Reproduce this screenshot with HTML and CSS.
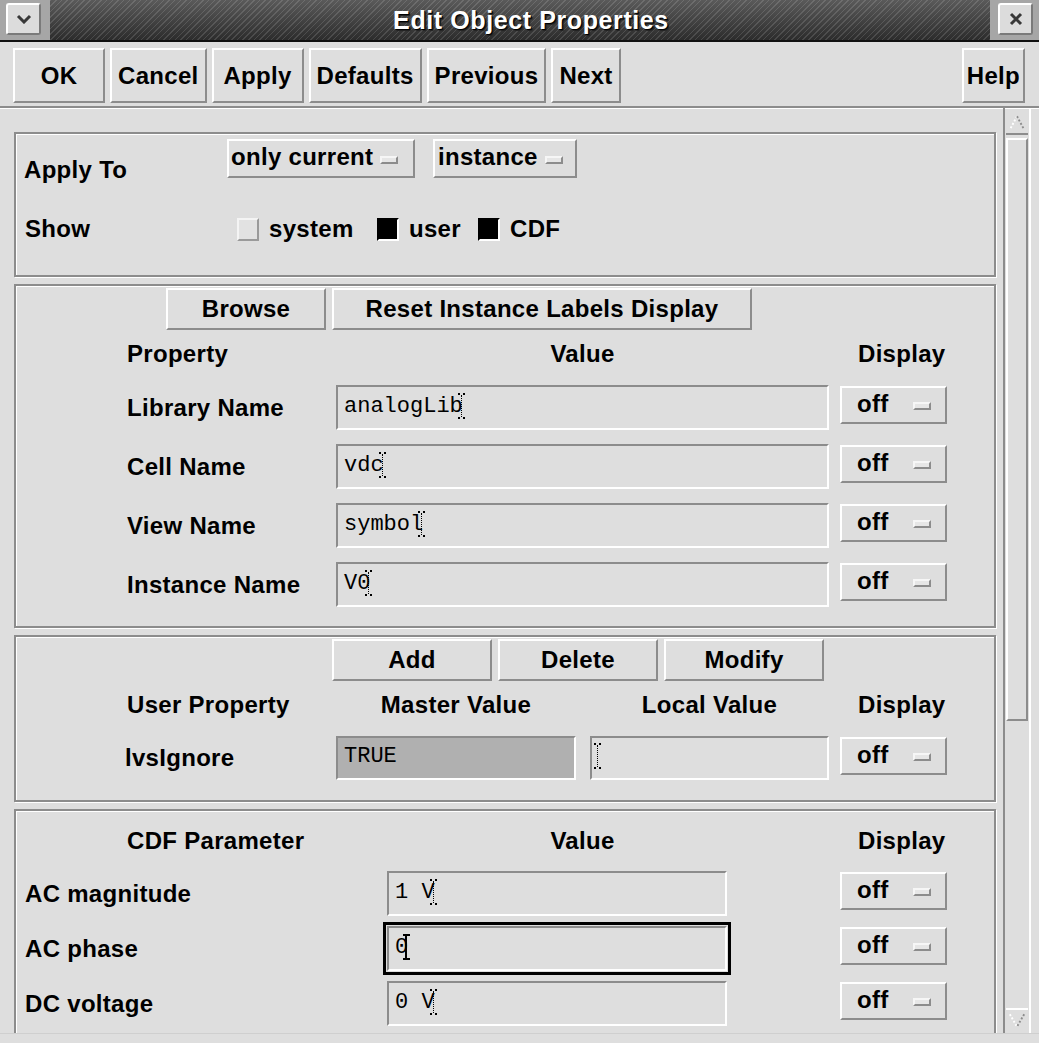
FILE: index.html
```html
<!DOCTYPE html>
<html lang="en">
<head>
    <meta charset="UTF-8">
    <meta name="viewport" content="width=device-width, initial-scale=1.0">
    <title>Edit Object Properties</title>
    <link rel="stylesheet" href="styles.css">
</head>
<body>
    <div class="window">
        <div class="titlebar">
            <div class="tb-side tb-left">
                <span class="tb-btn">
                    <svg width="16" height="10" viewBox="0 0 16 10"><path d="M2 2 L8 8 L14 2" fill="none" stroke="#383838" stroke-width="3"/></svg>
                </span>
            </div>
            <div class="tb-title">Edit Object Properties</div>
            <div class="tb-side tb-right">
                <span class="tb-btn">
                    <svg width="14" height="14" viewBox="0 0 14 14"><path d="M2 2 L12 12 M12 2 L2 12" fill="none" stroke="#383838" stroke-width="3"/></svg>
                </span>
            </div>
        </div>

        <div class="actions">
            <button class="btn">OK</button>
            <button class="btn">Cancel</button>
            <button class="btn">Apply</button>
            <button class="btn">Defaults</button>
            <button class="btn">Previous</button>
            <button class="btn btn-small">Next</button>
            <button class="btn btn-small btn-help">Help</button>
        </div>

        <div class="body">
            <div class="scroll-view">

                <!-- apply to / show -->
                <div class="panel panel-apply">
                    <div class="apply-row">
                        <div class="apply-label">Apply To</div>
                        <div class="dropdown dd-current">only current<span class="ind"></span></div>
                        <div class="dropdown dd-instance">instance<span class="ind"></span></div>
                    </div>
                    <div class="show-row">
                        <div class="show-label">Show</div>
                        <div class="check check-system"><span class="box"></span>system</div>
                        <div class="check check-user"><span class="box on"></span>user</div>
                        <div class="check"><span class="box on"></span>CDF</div>
                    </div>
                </div>

                <!-- instance properties -->
                <div class="panel panel-props">
                    <div class="btn-row btn-row-props">
                        <button class="btn btn-mid btn-browse">Browse</button>
                        <button class="btn btn-mid btn-reset">Reset Instance Labels Display</button>
                    </div>
                    <div class="cols-props head-row">
                        <div>Property</div>
                        <div class="head-value">Value</div>
                        <div class="head-display">Display</div>
                    </div>
                    <div class="cols-props data-row">
                        <div>Library Name</div>
                        <div class="field f-wide"><span class="val">analogLib<i class="caret"></i></span></div>
                        <div class="opt">off<span class="ind"></span></div>
                    </div>
                    <div class="cols-props data-row">
                        <div>Cell Name</div>
                        <div class="field f-wide"><span class="val">vdc<i class="caret"></i></span></div>
                        <div class="opt">off<span class="ind"></span></div>
                    </div>
                    <div class="cols-props data-row">
                        <div>View Name</div>
                        <div class="field f-wide"><span class="val">symbol<i class="caret"></i></span></div>
                        <div class="opt">off<span class="ind"></span></div>
                    </div>
                    <div class="cols-props data-row">
                        <div>Instance Name</div>
                        <div class="field f-wide"><span class="val">V0<i class="caret"></i></span></div>
                        <div class="opt">off<span class="ind"></span></div>
                    </div>
                </div>

                <!-- user properties -->
                <div class="panel panel-user">
                    <div class="btn-row btn-row-user">
                        <button class="btn btn-mid">Add</button>
                        <button class="btn btn-mid">Delete</button>
                        <button class="btn btn-mid">Modify</button>
                    </div>
                    <div class="cols-user head-row">
                        <div>User Property</div>
                        <div class="head-master">Master Value</div>
                        <div class="head-local">Local Value</div>
                        <div class="head-display">Display</div>
                    </div>
                    <div class="cols-user data-row data-row-user">
                        <div class="lvs">lvsIgnore</div>
                        <div class="field f-master"><span class="val">TRUE</span></div>
                        <div class="field f-local"><span class="val"><i class="caret caret-empty"></i></span></div>
                        <div class="opt">off<span class="ind"></span></div>
                    </div>
                </div>

                <!-- cdf parameters -->
                <div class="panel panel-cdf">
                    <div class="cols-cdf head-row head-row-cdf">
                        <div class="head-cdf">CDF Parameter</div>
                        <div class="head-cdf-value">Value</div>
                        <div class="head-display">Display</div>
                    </div>
                    <div class="cols-cdf data-row data-row-cdf">
                        <div>AC magnitude</div>
                        <div class="field f-cdf"><span class="val">1 V<i class="caret"></i></span></div>
                        <div class="opt">off<span class="ind"></span></div>
                    </div>
                    <div class="cols-cdf data-row data-row-cdf">
                        <div>AC phase</div>
                        <div class="field f-cdf focused"><span class="val">0<i class="caret solid"></i></span></div>
                        <div class="opt">off<span class="ind"></span></div>
                    </div>
                    <div class="cols-cdf data-row data-row-cdf">
                        <div>DC voltage</div>
                        <div class="field f-cdf"><span class="val">0 V<i class="caret"></i></span></div>
                        <div class="opt">off<span class="ind"></span></div>
                    </div>
                </div>

            </div>

            <div class="scrollbar">
                <span class="arrow arrow-up">
                    <svg width="23" height="21" viewBox="0 0 23 21">
                        <path d="M11.5 4 L4 18" stroke="#fff" stroke-width="2" stroke-dasharray="2 2"/>
                        <path d="M11.5 4 L19 18" stroke="#8c8c8c" stroke-width="2" stroke-dasharray="2 2"/>
                    </svg>
                </span>
                <span class="thumb"></span>
                <span class="trough"></span>
                <span class="arrow arrow-down">
                    <svg width="23" height="21" viewBox="0 0 23 21">
                        <path d="M4 4 L11.5 17" stroke="#fff" stroke-width="2" stroke-dasharray="2 2"/>
                        <path d="M19 4 L11.5 17" stroke="#8c8c8c" stroke-width="2" stroke-dasharray="2 2"/>
                    </svg>
                </span>
            </div>
        </div>

        <div class="footer"></div>
    </div>
</body>
</html>
```

FILE: styles.css
```css
* {
    box-sizing: border-box;
}

body {
    margin: 0;
    background-color: #dedede;
    font-family: "Liberation Sans", Arial, sans-serif;
    font-weight: bold;
    font-size: 24px;
    letter-spacing: 0.3px;
    color: #000;
}

.window {
    width: 1039px;
    height: 1043px;
    overflow: hidden;
    background-color: #dedede;
}

/* title bar */
.titlebar {
    display: flex;
    height: 42px;
    border-bottom: 2px solid #111;
}

.tb-side {
    width: 50px;
    background-color: #a6a6a6;
    padding-top: 3px;
    padding-left: 6px;
}

.tb-right {
    width: 49px;
    padding-left: 8px;
}

.tb-btn {
    width: 35px;
    height: 32px;
    display: flex;
    align-items: center;
    justify-content: center;
    background-color: #dcdcdc;
    border: 2px solid;
    border-color: #fff #7a7a7a #7a7a7a #fff;
    border-radius: 3px;
}

.tb-title {
    flex: 1;
    display: flex;
    align-items: center;
    justify-content: center;
    padding-left: 22px;
    color: #fff;
    font-size: 25px;
    letter-spacing: 0.6px;
    text-shadow: 1px 1px 0 #000, 2px 2px 1px #222;
    background:
        repeating-linear-gradient(135deg, rgba(255,255,255,0.13) 0 1px, transparent 1px 4px),
        linear-gradient(#5a5a5a, #2c2c2c);
}

/* top action buttons */
.actions {
    display: flex;
    gap: 5px;
    height: 66px;
    padding: 6px 14px 3px 13px;
    border-bottom: 2px solid #8c8c8c;
    box-shadow: 0 1px 0 #fff;
}

.btn {
    height: 55px;
    min-width: 92px;
    padding: 0 6px;
    font: inherit;
    letter-spacing: inherit;
    color: #000;
    background-color: #dedede;
    border: 2px solid;
    border-color: #fff #8c8c8c #8c8c8c #fff;
}

.btn-small {
    min-width: 62px;
}

.btn-help {
    margin-left: auto;
    padding: 0 3px;
}

.btn-mid {
    height: 42px;
    width: 160px;
}

/* scrolled area */
.body {
    display: flex;
    height: 925px;
}

.scroll-view {
    flex: 1;
    overflow: hidden;
    display: flex;
    flex-direction: column;
    gap: 7px;
    padding: 24px 7px 0 14px;
}

.panel {
    flex-shrink: 0;
    border: 2px solid #8c8c8c;
    box-shadow: inset 1px 1px 0 #fff, 1px 1px 0 #fff;
}

/* apply to panel */
.panel-apply {
    height: 145px;
    padding: 5px 0 0 8px;
}

.apply-row {
    display: flex;
    height: 76px;
}

.apply-label {
    width: 203px;
    padding-top: 17px;
    line-height: 28px;
}

.dropdown {
    height: 39px;
    display: flex;
    align-items: center;
    gap: 7px;
    padding-left: 2px;
    padding-bottom: 3px;
    border: 2px solid;
    border-color: #fff #8c8c8c #8c8c8c #fff;
}

.dd-current {
    width: 188px;
    margin-right: 18px;
}

.dd-instance {
    width: 144px;
    padding-left: 3px;
}

.ind {
    width: 18px;
    height: 8px;
    background-color: #e6e6e6;
    border: 2px solid;
    border-color: #f6f6f6 #8c8c8c #8c8c8c #f6f6f6;
}

.dropdown .ind {
    margin-top: 6px;
}

.show-row {
    display: flex;
    align-items: center;
    height: 28px;
}

.show-label {
    width: 213px;
    padding-left: 1px;
}

.check {
    display: flex;
    align-items: center;
    gap: 10px;
}

.check-system {
    width: 140px;
}

.check-user {
    width: 101px;
}

.box {
    width: 22px;
    height: 23px;
    background-color: #e2e2e2;
    border: 2px solid;
    border-color: #f4f4f4 #9a9a9a #9a9a9a #f4f4f4;
}

.box.on {
    background-color: #000;
    border-color: #000 #fff #fff #000;
}

/* instance property panel */
.panel-props {
    height: 344px;
    padding: 2px 0 0 111px;
}

.panel-user {
    height: 167px;
    padding: 2px 0 0 111px;
}

.btn-row {
    display: flex;
    gap: 6px;
}

.btn-row-props {
    padding-left: 39px;
}

.btn-reset {
    width: 420px;
}

.btn-row-user {
    padding-left: 205px;
}

.cols-props {
    display: grid;
    grid-template-columns: 209px 504px 107px;
    align-items: center;
}

.cols-user {
    display: grid;
    grid-template-columns: 209px 254px 250px 107px;
    align-items: center;
}

.head-row {
    height: 55px;
    padding-bottom: 8px;
}

.head-value {
    width: 493px;
    text-align: center;
}

.head-master {
    width: 240px;
    text-align: center;
}

.head-local {
    width: 239px;
    text-align: center;
}

.head-display {
    padding-left: 18px;
}

.data-row {
    height: 45px;
    margin-bottom: 14px;
}

.data-row-user {
    height: 44px;
}

.lvs {
    margin-left: -2px;
}

.field {
    height: 100%;
    display: flex;
    align-items: center;
    padding: 0 0 4px 6px;
    font-family: "Liberation Mono", "Courier New", monospace;
    font-weight: normal;
    font-size: 22px;
    letter-spacing: 0;
    background-color: #dedede;
    border: 2px solid;
    border-color: #8c8c8c #fff #fff #8c8c8c;
}

.f-wide {
    width: 493px;
}

.f-master {
    width: 240px;
    background-color: #b0b0b0;
}

.f-local {
    width: 239px;
    padding-left: 2px;
}

.f-cdf {
    width: 340px;
}

.field.focused {
    outline: 3px solid #000;
    outline-offset: 1px;
}

.caret {
    display: inline-block;
    position: relative;
    width: 7px;
    height: 26px;
    margin-left: -5px;
    vertical-align: middle;
    border-top: 2px dotted #000;
}

.caret::before {
    content: "";
    position: absolute;
    left: 3px;
    top: 0;
    bottom: 2px;
    border-left: 1px dotted #000;
}

.caret::after {
    content: "";
    position: absolute;
    left: 0;
    right: 0;
    bottom: 0;
    border-top: 2px dotted #000;
}

.caret-empty {
    margin-left: 0;
}

.caret.solid {
    border-top-style: solid;
}

.caret.solid::before {
    left: 2px;
    border-left: 2px solid #000;
}

.caret.solid::after {
    border-top-style: solid;
}

.opt {
    align-self: start;
    margin-top: 1px;
    width: 107px;
    height: 38px;
    display: flex;
    align-items: center;
    padding: 0 14px 2px 15px;
    border: 2px solid;
    border-color: #fff #8c8c8c #8c8c8c #fff;
}

.opt .ind {
    margin-left: auto;
    margin-top: 4px;
}

/* cdf panel */
.panel-cdf {
    height: 320px;
    padding: 0 0 0 9px;
}

.cols-cdf {
    display: grid;
    grid-template-columns: 362px 453px 107px;
    align-items: center;
}

.head-row-cdf {
    height: 60px;
    padding-bottom: 0;
}

.head-cdf {
    padding-left: 102px;
}

.head-cdf-value {
    width: 391px;
    text-align: center;
}

.data-row-cdf {
    margin-bottom: 10px;
}

/* scrollbar */
.scrollbar {
    width: 28px;
    margin-right: 8px;
    display: flex;
    flex-direction: column;
    gap: 3px;
    padding: 4px 1px 2px 1px;
    border-left: 2px solid #8c8c8c;
    border-right: 2px solid #fff;
}

.arrow {
    height: 23px;
    display: flex;
    align-items: center;
    justify-content: center;
}

.arrow-up {
    border-bottom: 2px solid #8c8c8c;
}

.arrow-down {
    border-top: 2px solid #fff;
}

.thumb {
    height: 583px;
    border: 2px solid;
    border-color: #fff #8c8c8c #8c8c8c #fff;
}

.trough {
    flex: 1;
}

.footer {
    height: 10px;
    border-top: 1px solid #cfcfcf;
}
```
